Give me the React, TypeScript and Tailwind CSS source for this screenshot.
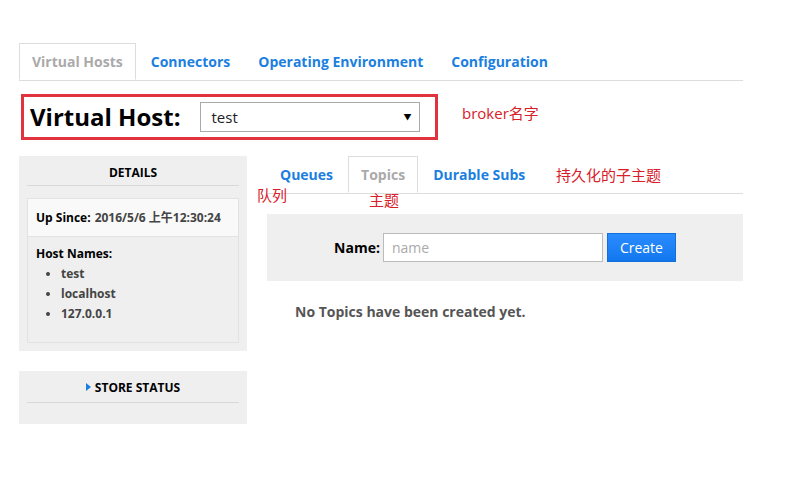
const font = "font-['Open_Sans',_'Noto_Sans_CJK_SC',_sans-serif]";

function Tab({ label, active }: { label: string; active?: boolean }) {
  return (
    <li
      className={
        active
          ? "mr-[2px] -mb-px flex h-[37px] items-center border border-b-white border-[#ddd] bg-white px-[12px] text-[#aaa]"
          : "mr-[2px] flex h-[37px] items-center px-[13px] text-[#1b7fdf]"
      }
    >
      {label}
    </li>
  );
}

function Note({ children, className }: { children: React.ReactNode; className?: string }) {
  return <span className={"absolute text-[15px] leading-none text-[#d8202a] " + (className ?? "")}>{children}</span>;
}

export default function App() {
  return (
    <div className={`${font} relative h-[487px] w-[793px] bg-white pl-[19px] pt-[43px] text-[#333]`}>
      <ul className="flex w-[724px] border-b border-[#ddd] text-[14px] font-bold">
        <Tab label="Virtual Hosts" active />
        <Tab label="Connectors" />
        <Tab label="Operating Environment" />
        <Tab label="Configuration" />
      </ul>

      <div className="mt-[13px] flex items-center">
        <div className="ml-[2px] flex h-[46px] w-[417px] items-center border-[3px] border-[#e0333d] pl-[6px]">
          <h1 className="text-[24px] font-bold text-black">Virtual Host:</h1>
          <div className="ml-[20px] flex h-[30px] w-[220px] items-center justify-between border border-[#aaa] bg-white pl-[10px] pr-[8px] text-[15px] text-[#222]">
            <span>test</span>
            <span className="text-[8px] text-black">▼</span>
          </div>
        </div>
        <span className="ml-[24px] -mt-[8px] text-[15px] text-[#d8202a]">broker名字</span>
      </div>

      <div className="mt-[16px] flex gap-[20px]">
        <div className="flex w-[228px] flex-col gap-[20px]">
          <div className="bg-[#efefef] px-[8px] pb-[8px]">
            <div className="flex h-[30px] items-center justify-center border-b border-[#d8d8d8] pt-[4px] text-[12px] font-bold text-black">
              DETAILS
            </div>
            <div className="mt-[12px] border border-[#e2e2e2]">
              <div className="flex h-[37px] items-center bg-[#f9f9f9] px-[8px] text-[12px] font-bold text-[#444]">
                <span className="mr-[4px] text-black">Up Since:</span>2016/5/6 上午12:30:24
              </div>
              <div className="border-t border-[#e2e2e2] px-[8px] pt-[7px] pb-[18px] text-[12px] font-bold">
                <div className="leading-[20px] text-black">Host Names:</div>
                <ul className="list-disc pl-[25px] leading-[20px] text-[#444]">
                  <li>test</li>
                  <li>localhost</li>
                  <li>127.0.0.1</li>
                </ul>
              </div>
            </div>
          </div>

          <div className="h-[53px] bg-[#efefef] px-[8px]">
            <div className="flex h-[32px] items-center justify-center gap-[4px] border-b border-[#d8d8d8] pt-[2px] text-[12px] font-bold text-black">
              <svg width="5" height="8" viewBox="0 0 5 8" className="mb-[1px]">
                <path d="M0 0 L5 4 L0 8 Z" fill="#1b7fdf" />
              </svg>
              STORE STATUS
            </div>
          </div>
        </div>

        <div className="w-[476px]">
          <ul className="flex border-b border-[#ddd] text-[14px] font-bold">
            <Tab label="Queues" />
            <Tab label="Topics" active />
            <Tab label="Durable Subs" />
          </ul>

          <div className="mt-[20px] flex h-[67px] items-center justify-center bg-[#efefef]">
            <label className="mr-[3px] text-[14px] font-bold text-black">Name:</label>
            <input
              placeholder="name"
              className="h-[29px] w-[220px] border border-[#bbb] bg-white px-[8px] text-[14px] outline-none placeholder:text-[#aaa]"
            />
            <button className="ml-[4px] h-[29px] w-[69px] border border-[#1470d8] bg-gradient-to-b from-[#2a8cff] to-[#1177ee] text-[14px] text-white">
              Create
            </button>
          </div>

          <p className="mt-[20px] pl-[28px] text-[14px] font-bold text-[#555]">No Topics have been created yet.</p>
        </div>
      </div>

      <Note className="left-[257px] top-[188px]">队列</Note>
      <Note className="left-[369px] top-[193px]">主题</Note>
      <Note className="left-[556px] top-[168px]">持久化的子主题</Note>
    </div>
  );
}
